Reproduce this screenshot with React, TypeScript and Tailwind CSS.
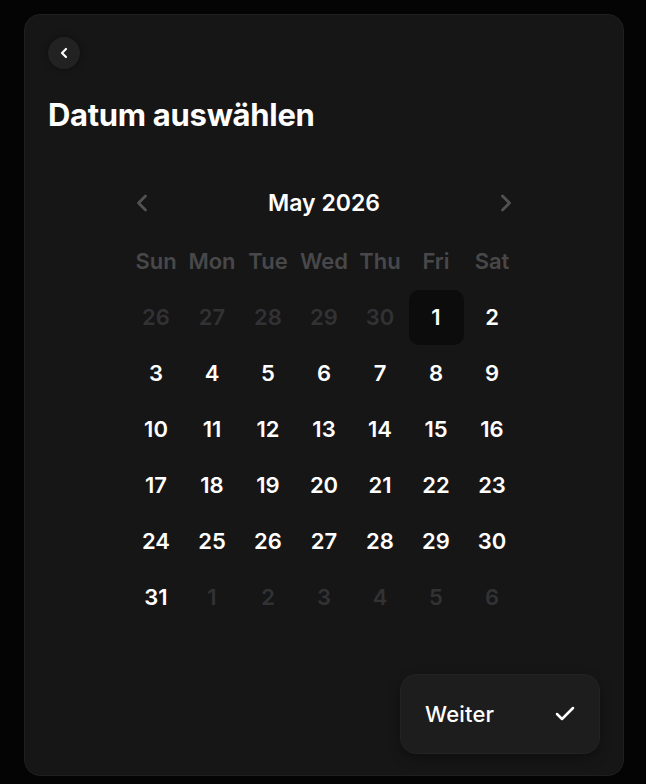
import React, { useState } from "react";
import { Check, ChevronLeft, ChevronRight } from "lucide-react";

const weekdays = ["Sun", "Mon", "Tue", "Wed", "Thu", "Fri", "Sat"];

type Day = { label: number; inMonth: boolean };

function buildDays(): Day[] {
  const days: Day[] = [];
  // May 2026 starts on a Friday
  for (let d = 26; d <= 30; d++) days.push({ label: d, inMonth: false });
  for (let d = 1; d <= 31; d++) days.push({ label: d, inMonth: true });
  for (let d = 1; d <= 6; d++) days.push({ label: d, inMonth: false });
  return days;
}

export default function App() {
  const [selected, setSelected] = useState(1);
  const days = buildDays();

  return (
    <div
      className="min-h-[784px] w-full bg-[#040404] pt-[14px] px-6"
      style={{ fontFamily: "Inter, 'Noto Sans', sans-serif" }}
    >
      <div className="flex h-[762px] w-[600px] flex-col rounded-2xl border border-[#1f1f1f] bg-[#161616] pt-[22px] pl-[23px] pr-[23px] pb-[21px]">
        <button className="flex h-8 w-8 items-center justify-center rounded-full bg-[#222222] shadow-[0_0_6px_rgba(0,0,0,0.4)]">
          <ChevronLeft size={16} strokeWidth={3.2} className="text-white" />
        </button>

        <h1 className="mt-[28px] text-[31px] font-bold leading-9 tracking-[-0.3px] text-white">
          Datum auswählen
        </h1>

        <div className="mx-auto mt-[50px] w-[392px]">
          <div className="flex h-10 items-center justify-between">
            <button className="text-[#525255]">
              <ChevronLeft size={28} strokeWidth={2.4} />
            </button>
            <span className="text-[23px] font-semibold text-white">May 2026</span>
            <button className="text-[#525255]">
              <ChevronRight size={28} strokeWidth={2.4} />
            </button>
          </div>

          <div className="mt-[10px] grid grid-cols-7">
            {weekdays.map((w) => (
              <div
                key={w}
                className="flex h-14 items-center justify-center text-[22px] font-semibold text-[#48484b]"
              >
                {w}
              </div>
            ))}
            {days.map((day, i) => {
              const isSelected = day.inMonth && day.label === selected;
              return (
                <button
                  key={i}
                  onClick={() => day.inMonth && setSelected(day.label)}
                  className={`m-[0.5px] flex h-[55px] items-center justify-center rounded-[10px] text-[22px] font-semibold ${
                    day.inMonth ? "text-white" : "text-[#323234]"
                  } ${isSelected ? "bg-[#0c0c0c]" : ""}`}
                >
                  {day.label}
                </button>
              );
            })}
          </div>
        </div>

        <div className="mt-auto flex justify-end">
          <button className="flex h-20 w-[200px] items-center justify-between rounded-2xl border border-[#232323] bg-[#1d1d1d] pl-6 pr-[22px] shadow-[0_4px_12px_rgba(0,0,0,0.35)]">
            <span className="text-[22px] font-medium tracking-[0.2px] text-white">Weiter</span>
            <Check size={24} strokeWidth={2.5} className="text-white" />
          </button>
        </div>
      </div>
    </div>
  );
}
